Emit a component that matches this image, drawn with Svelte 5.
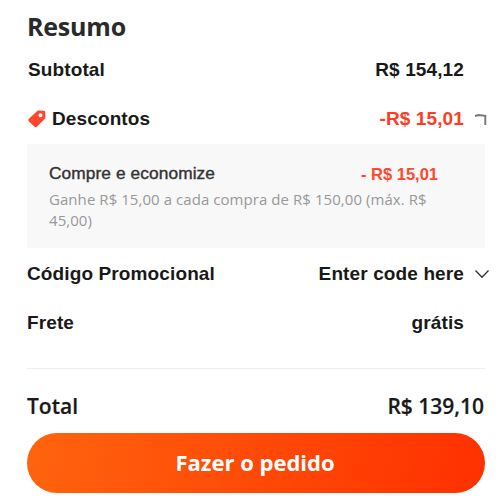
<script lang="ts">
  const subtotal = 'R$ 154,12';
  const discount = 'R$ 15,01';
  const total = 'R$ 139,10';
</script>

<div class="summary">
  <h2 class="title">Resumo</h2>

  <div class="row subtotal">
    <span>Subtotal</span>
    <span class="value">{subtotal}</span>
  </div>

  <div class="row discounts">
    <span class="label">
      <svg class="tag" width="18" height="18" viewBox="0 0 18 18">
        <path
          fill="#ff472e"
          fill-rule="evenodd"
          d="M9 1.2Q9.6.6 10.5.6L16 .8Q17.1.9 17.2 2L17.3 7.5Q17.3 8.4 16.6 9L9.1 16.6Q7.7 17.9 6.3 16.6L.9 11.4Q-.4 10 .9 8.7ZM12.5 3.2A2 2 0 1 0 12.5 7.2A2 2 0 1 0 12.5 3.2Z"
        />
      </svg>
      <span>Descontos</span>
    </span>
    <span class="value red">-{discount}</span>
    <svg class="arrow" width="16" height="16" viewBox="0 0 16 16">
      <path d="M1 5L4.5 4L11.3 4.8V14" fill="none" stroke="#777" stroke-width="1.9" />
    </svg>
  </div>

  <div class="promo">
    <div class="promo-head">
      <span class="promo-name">Compre e economize</span>
      <span class="promo-value">- {discount}</span>
    </div>
    <p class="promo-text">Ganhe R$ 15,00 a cada compra de R$ 150,00 (máx. R$ 45,00)</p>
  </div>

  <div class="row code">
    <span>Código Promocional</span>
    <span class="value">Enter code here</span>
    <svg class="arrow" width="16" height="16" viewBox="0 0 16 16">
      <path d="M1.5 4.5L8 11.3L14.5 4.5" fill="none" stroke="#333" stroke-width="1.3" />
    </svg>
  </div>

  <div class="row shipping">
    <span>Frete</span>
    <span class="value">grátis</span>
  </div>

  <div class="total">
    <span>Total</span>
    <span>{total}</span>
  </div>

  <button class="submit">Fazer o pedido</button>
</div>

<style>
  :global(body) {
    background: #fff;
  }

  .summary {
    box-sizing: border-box;
    width: 500px;
    height: 499px;
    padding: 8px 15px 0 27px;
    overflow: hidden;
    font-family: 'Liberation Sans', Arial, sans-serif;
    color: #191919;
  }

  .title {
    margin: 0;
    height: 38px;
    font: 700 25px/36px 'Open Sans', sans-serif;
    letter-spacing: -0.2px;
    color: #2a2a2a;
  }

  .row {
    display: flex;
    align-items: center;
    height: 50px;
    padding-right: 21px;
    font-size: 19px;
    font-weight: 700;
    letter-spacing: 0.12px;
    white-space: nowrap;
  }

  .value {
    margin-left: auto;
  }

  .red {
    color: #ff3b21;
  }

  .subtotal {
    height: 47px;
    padding-left: 1px;
  }

  .discounts {
    height: 51px;
  }

  .label {
    display: flex;
    align-items: center;
    gap: 6px;
  }

  .tag {
    margin-left: 1px;
  }

  .arrow {
    flex: none;
    margin: 0 -26px 0 10px;
  }

  .promo {
    box-sizing: border-box;
    height: 104px;
    padding: 19px 47px 0 22px;
    background: #f8f8f8;
  }

  .promo-head {
    display: flex;
    justify-content: space-between;
    height: 26px;
    line-height: 20px;
  }

  .promo-name {
    font-size: 17.3px;
    letter-spacing: 0.1px;
    color: #333;
    -webkit-text-stroke: 0.4px #333;
  }

  .promo-value {
    padding-top: 1px;
    font-size: 16.5px;
    font-weight: 700;
    color: #ff472e;
  }

  .promo-text {
    margin: 0;
    font: 400 15px/21px 'Open Sans', sans-serif;
    letter-spacing: 0.06px;
    color: #999;
  }

  .code {
    height: 51px;
  }

  .shipping {
    height: 47px;
  }

  .total {
    display: flex;
    justify-content: space-between;
    box-sizing: border-box;
    height: 65px;
    margin-top: 22px;
    padding: 22px 1px 0 0;
    border-top: 1px solid #eee;
    font: 600 21px/30px 'Open Sans', sans-serif;
    -webkit-text-stroke: 0.2px #191919;
  }

  .promo,
  .total,
  .submit {
    width: 458px;
  }

  .submit {
    display: block;
    height: 60px;
    padding: 0 2px 2px 0;
    border: 0;
    border-radius: 30px;
    background: linear-gradient(100deg, #ff640e, #ff3000);
    font: 700 22px/58px 'Open Sans', sans-serif;
    color: #fff;
  }
</style>
